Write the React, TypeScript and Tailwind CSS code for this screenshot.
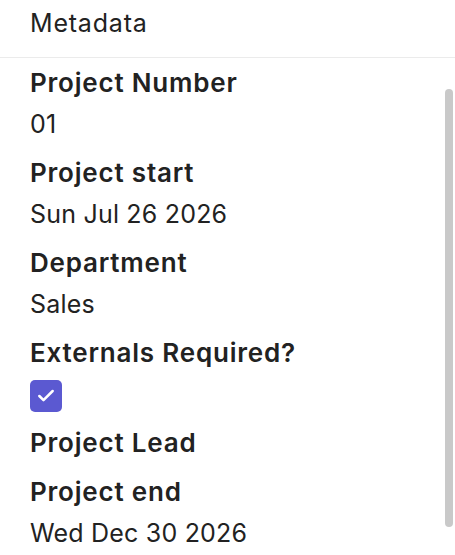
import { Check } from "lucide-react";

type Field = {
  label: string;
  value?: string;
  checked?: boolean;
};

const fields: Field[] = [
  { label: "Project Number", value: "01" },
  { label: "Project start", value: "Sun Jul 26 2026" },
  { label: "Department", value: "Sales" },
  { label: "Externals Required?", checked: true },
  { label: "Project Lead" },
  { label: "Project end", value: "Wed Dec 30 2026" },
];

export default function App() {
  return (
    <main
      className="relative w-[455px] h-[555px] overflow-hidden bg-white text-[#222]"
      style={{ fontFamily: "Inter, 'Noto Sans', sans-serif" }}
    >
      <header className="h-[58px] border-b border-[#ebebeb] px-[30px] flex items-center">
        <h1 className="text-[25px] leading-9 tracking-[0.8px] pb-[11px]">Metadata</h1>
      </header>

      <div className="flex flex-col gap-[13px] px-[30px] pt-[7px]">
        {fields.map((f) => (
          <div key={f.label} className="flex flex-col">
            <div className="text-[26px] font-semibold leading-9 tracking-[0.8px]">{f.label}</div>
            {f.value && (
              <div className="mt-[5px] text-[25px] leading-9 tracking-[0.2px]">{f.value}</div>
            )}
            {f.checked !== undefined && (
              <div className="mt-[9px] w-[32px] h-[32px] rounded-[5px] bg-[#5b59d1] flex items-center justify-center">
                {f.checked && <Check className="w-5 h-5 text-white" strokeWidth={3} />}
              </div>
            )}
          </div>
        ))}
      </div>

      {/* scrollbar thumb */}
      <div className="absolute right-[2px] top-[89px] w-[8px] h-[438px] rounded-full bg-[#c9c9c9]" />
    </main>
  );
}
